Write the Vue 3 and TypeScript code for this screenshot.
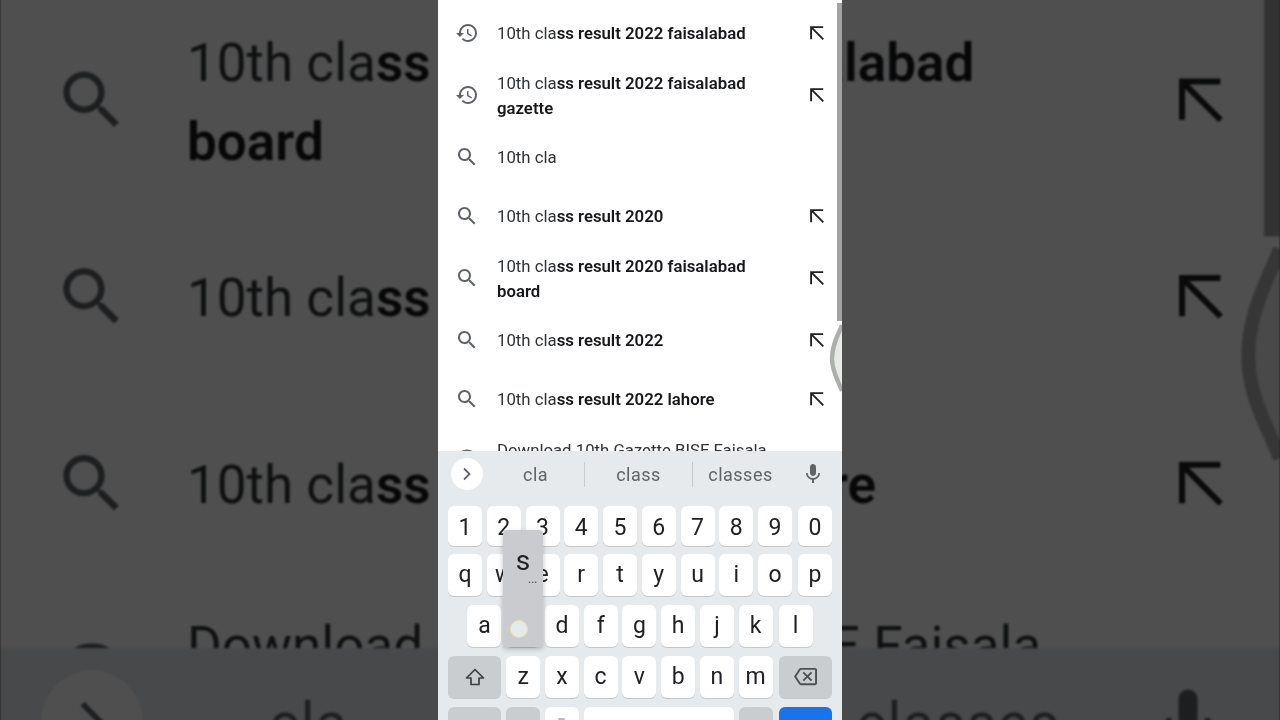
<script setup lang="ts">
interface Row { icon: 'history' | 'search' | 'globe'; plain: string; bold: string; arrow: boolean; kind: string }
const layers = ['bg', 'fg']
const rows: Row[] = [
  { icon: 'history', plain: '10th cla', bold: 'ss result 2022 faisalabad', arrow: true, kind: '' },
  { icon: 'history', plain: '10th cla', bold: 'ss result 2022 faisalabad gazette', arrow: true, kind: 'tall' },
  { icon: 'search', plain: '10th cla', bold: '', arrow: false, kind: '' },
  { icon: 'search', plain: '10th cla', bold: 'ss result 2020', arrow: true, kind: '' },
  { icon: 'search', plain: '10th cla', bold: 'ss result 2020 faisalabad board', arrow: true, kind: 'tall' },
  { icon: 'search', plain: '10th cla', bold: 'ss result 2022', arrow: true, kind: '' },
  { icon: 'search', plain: '10th cla', bold: 'ss result 2022 lahore', arrow: true, kind: '' },
  { icon: 'globe', plain: 'Download 10th Gazette BISE Faisala', bold: '', arrow: false, kind: 'tall cut' },
]
const numbers = '1234567890'.split('')
const top = 'qwertyuiop'.split('')
const middle = 'asdfghjkl'.split('')
const bottom = 'zxcvbnm'.split('')
</script>

<template>
  <div class="stage">
    <template v-for="layer in layers" :key="layer">
      <div class="screen" :class="layer">
        <div class="list">
          <div v-for="(row, i) in rows" :key="i" class="row" :class="row.kind">
            <svg class="lead" viewBox="0 0 24 24" width="24" height="24">
              <path v-if="row.icon === 'history'" d="M13 3c-4.97 0-9 4.03-9 9H1l3.89 3.89.07.14L9 12H6c0-3.87 3.13-7 7-7s7 3.13 7 7-3.13 7-7 7c-1.93 0-3.68-.79-4.94-2.06l-1.42 1.42C8.27 19.99 10.51 21 13 21c4.97 0 9-4.03 9-9s-4.03-9-9-9zm-1 5v5l4.28 2.54.72-1.21-3.5-2.08V8H12z" />
              <path v-else-if="row.icon === 'search'" d="M15.5 14h-.79l-.28-.27C15.41 12.59 16 11.11 16 9.5 16 5.91 13.09 3 9.5 3S3 5.91 3 9.5 5.91 16 9.5 16c1.61 0 3.09-.59 4.23-1.57l.27.28v.79l5 4.99L20.49 19l-4.99-5zm-6 0C7.01 14 5 11.99 5 9.5S7.01 5 9.5 5 14 7.01 14 9.5 11.99 14 9.5 14z" />
              <circle v-else cx="12" cy="12" r="10.5" fill="none" stroke="#5f6368" stroke-width="2" />
            </svg>
            <div class="label">{{ row.plain }}<b>{{ row.bold }}</b></div>
            <svg v-if="row.arrow" class="arrow" viewBox="0 0 14 14" width="14" height="14">
              <path d="M1.1 13.2V1.1H13.2M1.4 1.4 13.3 13.3" />
            </svg>
          </div>
          <svg class="edge" viewBox="0 0 14 70" width="14" height="70">
            <path class="edge-fill" d="M14 2C10 12 4 22 4 36C4 48 10 58 14 68Z" />
            <path class="edge-line" d="M14 2C10 12 4 22 4 36C4 48 10 58 14 68" />
          </svg>
          <div class="scrollbar"></div>
        </div>
        <div class="keyboard">
          <div class="suggestions">
            <div class="toggle">
              <svg viewBox="0 0 10 14" width="10" height="14"><path d="M2 1.5 7.5 7 2 12.5" fill="none" stroke="#5f6368" stroke-width="1.8" /></svg>
            </div>
            <span class="word w1">cla</span>
            <i class="sep"></i>
            <span class="word w2">class</span>
            <i class="sep"></i>
            <span class="word w3">classes</span>
            <svg class="mic" viewBox="0 0 24 24" width="24" height="24">
              <path d="M12 14c1.66 0 2.99-1.34 2.99-3L15 5c0-1.66-1.34-3-3-3S9 3.34 9 5v6c0 1.66 1.34 3 3 3zm5.3-3c0 3-2.54 5.1-5.3 5.1S6.7 14 6.7 11H5c0 3.41 2.72 6.23 6 6.72V21h2v-3.28c3.28-.48 6-3.3 6-6.72h-1.7z" />
            </svg>
          </div>
          <div v-if="layer === 'fg'" class="keys">
            <div class="keyrow num"><span v-for="k in numbers" :key="k" class="key">{{ k }}</span></div>
            <div class="keyrow"><span v-for="k in top" :key="k" class="key">{{ k }}</span></div>
            <div class="keyrow inset"><span v-for="k in middle" :key="k" class="key">{{ k }}</span></div>
            <div class="keyrow">
              <span class="key wide grey">
                <svg viewBox="0 0 20 18" width="20" height="18"><path d="M10 1.5 18.5 10H14v6.5H6V10H1.5Z" fill="none" stroke="#3c4043" stroke-width="1.7" stroke-linejoin="round" /></svg>
              </span>
              <span v-for="k in bottom" :key="k" class="key">{{ k }}</span>
              <span class="key wide grey">
                <svg viewBox="0 0 24 24" width="23" height="23"><path fill="#4d5156" d="M22 3H7c-.69 0-1.23.35-1.59.88L0 12l5.41 8.11c.36.53.9.89 1.59.89h15c1.1 0 2-.9 2-2V5c0-1.1-.9-2-2-2zm0 16H7.07L2.4 12l4.66-7H22v14zm-11.59-2L14 13.41 17.59 17 19 15.59 15.41 12 19 8.41 17.59 7 14 10.59 10.41 7 9 8.41 12.59 12 9 15.59z" /></svg>
              </span>
            </div>
            <div class="keyrow">
              <span class="key wide grey"></span>
              <span class="key grey"></span>
              <span class="key comma"><i></i></span>
              <span class="key space"></span>
              <span class="key grey"></span>
              <span class="key wide blue"></span>
            </div>
          </div>
          <div v-if="layer === 'fg'" class="popup">
            <span class="pop-letter">s</span>
            <span class="pop-dots">...</span>
            <span class="pop-dot"></span>
          </div>
        </div>
      </div>
      <div v-if="layer === 'bg'" class="shade"></div>
    </template>
  </div>
</template>

<style scoped>
.stage {
  position: relative;
  width: 1280px;
  height: 720px;
  overflow: hidden;
  display: flex;
  justify-content: center;
  background: #4e4e4e;
  font-family: Roboto, "Liberation Sans", sans-serif;
}
.screen {
  width: 404px;
  height: 720px;
  display: flex;
  flex-direction: column;
  background: #fff;
  overflow: hidden;
  flex: none;
}
.screen.bg {
  position: absolute;
  left: 438px;
  top: 0;
  transform: scale(3.168);
  filter: blur(0.3px);
}
.screen.fg {
  position: relative;
  filter: blur(0.25px);
}
.shade {
  position: absolute;
  inset: 0;
  background: rgba(0, 0, 0, 0.69);
}
.list {
  position: relative;
  height: 450.5px;
  flex: none;
  overflow: hidden;
  padding-top: 3.5px;
  box-sizing: border-box;
}
.row {
  height: 59px;
  display: flex;
  align-items: center;
  padding: 0 15px 0 17px;
  position: relative;
  box-sizing: border-box;
}
.row.tall {
  height: 65px;
}
.lead {
  flex: none;
  fill: #5f6368;
  margin-right: 18px;
}
.label {
  width: 275px;
  padding-top: 1px;
  font-size: 16.75px;
  line-height: 25px;
  color: #303336;
}
.row.cut .label {
  align-self: flex-start;
  padding-top: 9px;
}
.label b {
  font-weight: 600;
  color: #16171a;
}
.arrow {
  flex: none;
  margin-left: auto;
  margin-right: 3px;
  fill: none;
  stroke: #202124;
  stroke-width: 1.9;
}
.edge {
  position: absolute;
  right: 0;
  top: 323px;
}
.edge-fill {
  fill: #e8eae8;
}
.edge-line {
  fill: none;
  stroke: #adafad;
  stroke-width: 4.4;
}
.scrollbar {
  position: absolute;
  right: 0;
  top: 3px;
  width: 5px;
  height: 318px;
  background: #a3a3a3;
}
.keyboard {
  position: relative;
  flex: 1;
  background: #e6eaed;
}
.suggestions {
  height: 47.5px;
  display: flex;
  align-items: center;
  padding: 0 17px 0 13px;
  color: #5f6368;
}
.toggle {
  width: 32px;
  height: 32px;
  flex: none;
  border-radius: 50%;
  background: #fff;
  display: flex;
  align-items: center;
  justify-content: center;
}
.word {
  flex: none;
  text-align: center;
  font-size: 18px;
  letter-spacing: 0.5px;
  line-height: 24px;
  padding-top: 2px;
  box-sizing: border-box;
}
.w1 {
  width: 101px;
  padding-left: 4px;
}
.w2 {
  width: 107px;
}
.w3 {
  width: 95px;
}
.sep {
  width: 1px;
  height: 25px;
  background: #c6cbcf;
  flex: none;
}
.mic {
  fill: #5f6368;
  flex: none;
  margin-left: 13px;
}
.keys {
  display: flex;
  flex-direction: column;
  gap: 9.1px;
  padding: 8px 10px 0;
}
.keyrow {
  display: flex;
  gap: 4.75px;
  height: 42px;
  flex: none;
}
.keyrow > .key:last-child {
  margin-left: auto;
}
.keyrow.num {
  height: 40px;
  margin-bottom: -1.5px;
}
.keyrow.num .key {
  padding-top: 2px;
  box-sizing: border-box;
}
.keyrow.inset {
  padding: 0 19.45px;
}
.key {
  width: 34px;
  flex: none;
  display: flex;
  align-items: center;
  justify-content: center;
  background: #fff;
  border-radius: 6px;
  box-shadow: 0 1px 0 #c4c8cb;
  font-size: 23px;
  color: #202124;
}
.key.wide {
  width: 53.4px;
}
.key.grey {
  background: #c9cdd0;
}
.key.blue {
  background: #1a73e8;
}
.key.space {
  width: 150.7px;
}
.key.comma {
  align-items: flex-start;
}
.key.comma i {
  width: 7px;
  height: 2px;
  margin-top: 11px;
  background: #b9bcbf;
  border-radius: 2px;
}
.popup {
  position: absolute;
  left: 65px;
  top: 79.5px;
  width: 40px;
  height: 117px;
  background: #c9cbce;
  border-radius: 4px;
  box-shadow: 0 2px 5px rgba(0, 0, 0, 0.25);
}
.pop-letter {
  position: absolute;
  left: 0;
  width: 40px;
  top: 14px;
  text-align: center;
  font-size: 28px;
  line-height: 34px;
  color: #202124;
}
.pop-dots {
  position: absolute;
  left: 25px;
  top: 43px;
  font-size: 12px;
  line-height: 12px;
  color: #3c4043;
}
.pop-dot {
  position: absolute;
  left: 7px;
  top: 90px;
  width: 18px;
  height: 18px;
  box-sizing: border-box;
  border-radius: 50%;
  background: #e6eaed;
  border: 1.5px solid #efdcae;
}
</style>
